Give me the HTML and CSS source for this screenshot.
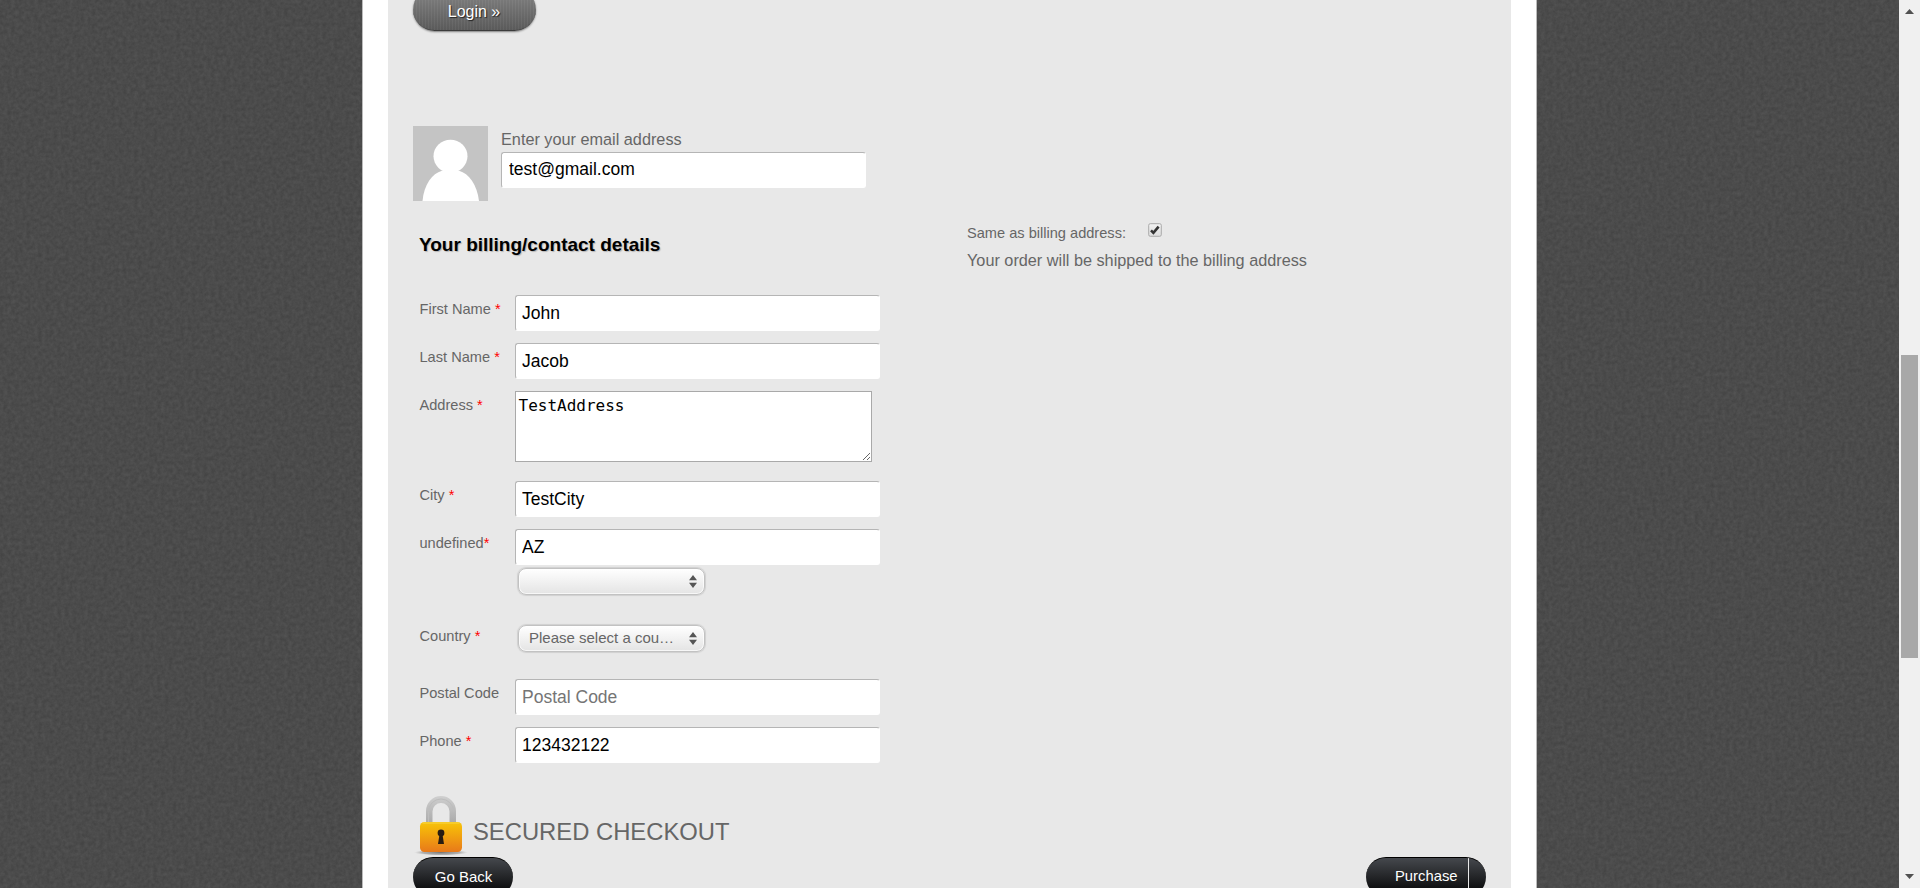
FILE: index.html
```html
<!DOCTYPE html>
<html lang="en">
<head>
<meta charset="utf-8">
<title>Checkout</title>
<link rel="stylesheet" href="styles.css">
</head>
<body>
<div class="screen">
  <div class="backdrop">
    <svg class="texture" aria-hidden="true">
      <filter id="grain" x="0" y="0" width="100%" height="100%" color-interpolation-filters="sRGB">
        <feTurbulence type="fractalNoise" baseFrequency="0.26" numOctaves="3" seed="4" stitchTiles="stitch"/>
        <feColorMatrix values="0.08 0 0 0 0.254  0.08 0 0 0 0.254  0.08 0 0 0 0.254  0 0 0 0 1"/>
      </filter>
      <rect width="100%" height="100%" filter="url(#grain)"/>
    </svg>
    <div class="page">
      <main class="panel">
        <button class="btn-login">Login »</button>

        <section class="account">
          <svg class="avatar" viewBox="0 0 75 77" preserveAspectRatio="none">
            <rect width="75" height="77" fill="#c4c4c4"/>
            <circle cx="37.5" cy="31" r="17" fill="#fff"/>
            <path d="M9.500 77C11 60 19 49 29 46H46C56 49 64 60 66 77Z" fill="#fff"/>
          </svg>
          <div class="email">
            <label for="email">Enter your email address</label>
            <input id="email" class="field" type="text" value="test@gmail.com">
          </div>
        </section>

        <div class="columns">
          <section class="billing">
            <h4>Your billing/contact details</h4>
            <div class="row"><label>First Name <i>*</i></label><input class="field" type="text" value="John"></div>
            <div class="row"><label>Last Name <i>*</i></label><input class="field" type="text" value="Jacob"></div>
            <div class="row row-area"><label>Address <i>*</i></label><textarea>TestAddress</textarea></div>
            <div class="row"><label>City <i>*</i></label><input class="field" type="text" value="TestCity"></div>
            <div class="row row-state"><label>undefined<i>*</i></label>
              <div><input class="field" type="text" value="AZ">
                <div class="select"><span></span><svg viewBox="0 0 8 13"><path d="M4 0 8 5.3H0ZM0 7.7H8L4 13Z"/></svg></div></div>
            </div>
            <div class="row row-country"><label>Country <i>*</i></label>
              <div class="select"><span>Please select a cou…</span><svg viewBox="0 0 8 13"><path d="M4 0 8 5.3H0ZM0 7.7H8L4 13Z"/></svg></div>
            </div>
            <div class="row"><label>Postal Code</label><input class="field" type="text" placeholder="Postal Code"></div>
            <div class="row"><label>Phone <i>*</i></label><input class="field" type="text" value="123432122"></div>
          </section>
          <section class="shipping">
            <div class="same"><span>Same as billing address:</span>
              <svg class="check" viewBox="0 0 14 15">
                <defs><linearGradient id="ck" x2="0" y2="1"><stop stop-color="#f2f2f2"/><stop offset="1" stop-color="#dcdcdc"/></linearGradient></defs>
                <rect x=".7" y=".7" width="12.6" height="12.6" rx="1.6" fill="url(#ck)" stroke="#aaa"/>
                <path d="M3 7.4 5.4 9.8 10.6 3.6" fill="none" stroke="#333" stroke-width="2.6"/>
              </svg>
            </div>
            <p>Your order will be shipped to the billing address</p>
          </section>
        </div>

        <div class="secured">
          <svg class="lock" viewBox="0 0 54 62">
            <defs>
              <linearGradient id="body" x2="0" y2="1"><stop stop-color="#f6c40c"/><stop offset=".2" stop-color="#f5b60a"/><stop offset="1" stop-color="#e8791a"/></linearGradient>
              <linearGradient id="bow" x2="0" y2="1"><stop stop-color="#cfcfcf"/><stop offset="1" stop-color="#a9a9a9"/></linearGradient>
              <radialGradient id="shade"><stop stop-color="#777"/><stop offset=".7" stop-color="#999" stop-opacity=".7"/><stop offset="1" stop-color="#bbb" stop-opacity="0"/></radialGradient>
            </defs>
            <ellipse cx="27" cy="57.5" rx="27" ry="3" fill="url(#shade)"/>
            <path d="M12 29V16a15 15 0 0 1 30 0V29H35.500V16.500a8.500 8.500 0 0 0-17 0V29Z" fill="url(#bow)"/>
            <path d="M14.500 28V16.500a12.500 12.500 0 0 1 25 0" fill="none" stroke="#bdbdbd" stroke-width="1"/>
            <rect x="6" y="27" width="42" height="30" rx="4.500" fill="url(#body)"/>
            <path d="M8.500 28H45.500" stroke="#f8d54a" stroke-width="1"/>
            <circle cx="27" cy="38" r="3.400" fill="#271c12"/>
            <path d="M25.600 39H28.400L30 49H24Z" fill="#271c12"/>
          </svg>
          <span>SECURED CHECKOUT</span>
        </div>
        <div class="actions">
          <button class="btn-dark btn-back">Go Back</button>
          <button class="btn-dark btn-buy"><span>Purchase</span></button>
        </div>
      </main>
    </div>
  </div>
  <div class="scrollbar">
    <svg viewBox="0 0 9 5"><path d="M4.500 0 9 5H0Z"/></svg>
    <div class="track"><div class="thumb"></div></div>
    <svg viewBox="0 0 9 5"><path d="M0 0H9L4.500 5Z"/></svg>
  </div>
</div>
</body>
</html>
```
FILE: styles.css
```css
* { box-sizing: border-box; }
body {
  margin: 0;
  font-family: "Liberation Sans", Arial, sans-serif;
  font-size: 16.25px;
  color: #666;
  overflow: hidden;
}
.screen { display: flex; width: 1920px; height: 888px; }
.backdrop {
  position: relative;
  flex: 1;
  background: #4a4a4a;
  overflow: hidden;
  padding-left: 362px;
}
.texture { position: absolute; inset: 0; width: 100%; height: 100%; }
.page {
  position: relative;
  width: 1175px;
  height: 888px;
  background: #fff;
  border: solid #bbb;
  border-width: 0 1px;
  padding: 0 25px;
}
.panel {
  height: 888px;
  background: #e8e8e8;
  padding: 0 25px;
  overflow: hidden;
}
button { font-family: inherit; border: 0; color: #fff; padding: 0; display: block; }
.btn-login {
  width: 123px;
  height: 43px;
  margin-top: -12px;
  padding: 5px 1px 0 0;
  border-radius: 22px;
  font-size: 16px;
  text-shadow: 1px 1px 1px #222;
  background:
    repeating-linear-gradient(90deg, rgba(255,255,255,.05) 0 1px, transparent 1px 3px),
    linear-gradient(#858585, #5a5a5a);
  border-bottom: 1px solid #3c3c3c;
  box-shadow: 0 1px 2px rgba(0,0,0,.45);
}
.account { display: flex; margin-top: 95px; height: 78px; }
.avatar { width: 75px; height: 75px; margin-right: 13px; }
.email label { display: block; height: 26px; line-height: 27px; }
.field {
  display: block;
  width: 365px;
  height: 36px;
  padding: 0 6px;
  border: 1px solid #fff;
  border-top-color: #b5b5b5;
  border-left-color: #b5b5b5;
  border-radius: 3px;
  background: #fff;
  font: 17.5px "Liberation Sans", Arial, sans-serif;
  color: #000;
  outline: 0;
}
.email .field { padding: 0 7px 2px; }
.field::placeholder { color: #757575; }
.columns { display: flex; }
.billing { width: 547px; padding-left: 6px; }
h4 {
  margin: 28px 0 37px;
  height: 26px;
  line-height: 26px;
  font-size: 19px;
  color: #000;
  text-shadow: 1px 1px 1px #b4b4b4;
}
.row { display: flex; height: 36px; margin-bottom: 12px; }
.row label { width: 96px; padding-left: .5px; font-size: 14.6px; line-height: 28px; white-space: nowrap; }
.row i { color: #f00; font-style: normal; }
.row-area { height: 71px; margin-bottom: 19px; }
textarea {
  width: 357px;
  height: 71px;
  border: 1px solid #a9a9a9;
  padding: 4px 2.5px;
  margin: 0;
  background: #fff;
  font: 16px/19px "DejaVu Sans Mono", monospace;
  color: #000;
  outline: 0;
}
.row-state { height: 67px; margin-bottom: 26px; }
.row-state .select { margin-top: 3px; }
.row-country { height: 31px; margin: 0 0 26px; }
.row-country .select { margin-top: 3px; }
.select {
  display: flex;
  align-items: center;
  justify-content: space-between;
  width: 187px;
  height: 27px;
  margin-left: 3px;
  padding: 0 7px 0 10px;
  border: 1px solid #c2c2c2;
  border-radius: 8px;
  background: linear-gradient(#fff, #e4e4e4);
  box-shadow: inset 0 0 0 1px rgba(255,255,255,.7), 0 0 1px 1px #d0d0d0;
  font-size: 15px;
}
.select span { padding-bottom: 2px; }
.select svg { width: 8px; height: 13px; fill: #555; }
.shipping { padding-left: 7px; }
.same { display: flex; height: 29px; margin-top: 17px; font-size: 14.6px; line-height: 24px; }
.check { width: 14px; height: 15px; margin: 2px 0 0 22px; }
.shipping p { margin: 0; line-height: 20px; }
.secured { display: flex; height: 62px; margin-top: 20px; font-size: 23.8px; }
.lock { width: 54px; height: 62px; margin-left: 1px; }
.secured span { margin-left: 5px; line-height: 27px; padding-top: 23px; }
.actions { display: flex; justify-content: space-between; }
.btn-dark {
  height: 40px;
  border-radius: 20px;
  font-size: 15px;
  border-top: 1px solid #000;
  background: linear-gradient(#45484d, #000);
  padding-bottom: 3px;
  flex: none;
}
.btn-back { width: 100px; padding-left: 1px; }
.btn-buy { width: 120px; padding-bottom: 0; text-align: left; overflow: hidden; }
.btn-buy span {
  display: block;
  width: 103px;
  height: 39px;
  padding-left: 29px;
  line-height: 36px;
  font-size: 14.8px;
  border-right: 1px solid #e8e8e8;
}
.scrollbar {
  width: 21px;
  background: #f0f0f0;
  display: flex;
  flex-direction: column;
  align-items: center;
  padding: 9px 0 9px;
}
.scrollbar svg { width: 9px; height: 5px; fill: #505050; flex: none; }
.track { flex: 1; padding-top: 341px; }
.thumb { width: 17px; height: 303px; background: #a8a8a8; }
```
